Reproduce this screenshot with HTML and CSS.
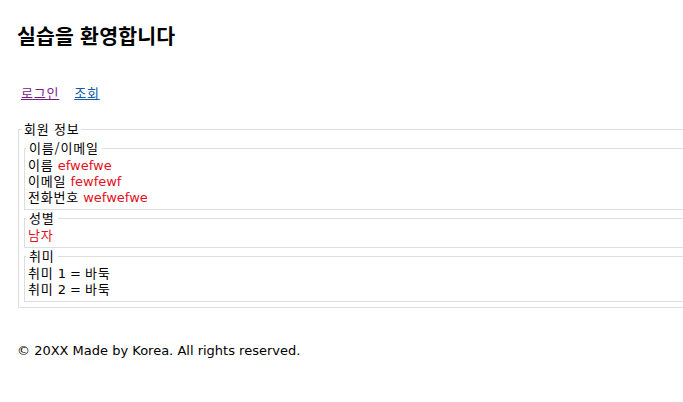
FILE: index.html
```html
<!DOCTYPE html>
<html lang="ko">
<head>
<meta charset="utf-8">
<title>실습</title>
<link rel="stylesheet" href="styles.css">
</head>
<body>
<div class="page">
  <h1 class="title">실습을 환영합니다</h1>
  <nav class="nav">
    <a class="nav-link visited" href="#login">로그인</a>
    <a class="nav-link" href="#search">조회</a>
  </nav>
  <fieldset class="box outer">
    <legend class="legend">회원 정보</legend>
    <fieldset class="box inner">
      <legend class="legend">이름/이메일</legend>
      <div class="row"><span class="ko">이름</span> <span class="val">efwefwe</span></div>
      <div class="row"><span class="ko">이메일</span> <span class="val">fewfewf</span></div>
      <div class="row"><span class="ko">전화번호</span> <span class="val">wefwefwe</span></div>
    </fieldset>
    <fieldset class="box inner">
      <legend class="legend">성별</legend>
      <div class="row"><span class="val ko">남자</span></div>
    </fieldset>
    <fieldset class="box inner">
      <legend class="legend">취미</legend>
      <div class="row"><span class="ko">취미</span> 1 = <span class="ko">바둑</span></div>
      <div class="row"><span class="ko">취미</span> 2 = <span class="ko">바둑</span></div>
    </fieldset>
  </fieldset>
  <footer class="footer">© 20XX Made by Korea. All rights reserved.</footer>
</div>
</body>
</html>
```
FILE: styles.css
```css
html, body {
  margin: 0;
  padding: 0;
  overflow: hidden;
  background: #fff;
}
body {
  font-family: "DejaVu Sans", Verdana, "Noto Sans CJK KR", sans-serif;
  font-size: 13px;
  color: #000;
}
.page {
  width: 720px;
  padding: 16px 0 0 16px;
}
.title {
  margin: 7px 0 0 1px;
  font-size: 20.5px;
  font-weight: bold;
  line-height: 24px;
  letter-spacing: 0.2px;
  font-family: "Noto Sans CJK KR", sans-serif;
}
.nav {
  margin-top: 38px;
  padding-left: 5px;
  display: flex;
  gap: 15px;
  line-height: 16px;
}
.nav-link {
  color: #0b5cad;
  text-decoration: underline;
  letter-spacing: 0.8px;
  font-family: "Noto Sans CJK KR", sans-serif;
}
.nav-link.visited {
  color: #7a1a86;
}
.box {
  border: 1px solid #dedede;
  margin: 0;
  min-width: 0;
}
.outer {
  margin: 20px 0 0 2px;
  padding: 3px 0 5px 5px;
}
.inner {
  padding: 2px 0 3px 3px;
  margin: 0;
}
.legend {
  padding: 0 2px;
  margin-left: -2px;
  line-height: 16px;
  letter-spacing: 0.8px;
  font-family: "Noto Sans CJK KR", sans-serif;
}
.inner .legend {
  padding: 0 3px;
}
.row {
  height: 16px;
  line-height: 16px;
  font-family: "DejaVu Sans", "Noto Sans CJK KR", sans-serif;
}
.ko {
  letter-spacing: 0.8px;
  line-height: 12px;
  font-family: "Noto Sans CJK KR", sans-serif;
}
.val {
  color: #e3101c;
}
.footer {
  margin: 35px 0 0 1px;
  line-height: 16px;
}
```
